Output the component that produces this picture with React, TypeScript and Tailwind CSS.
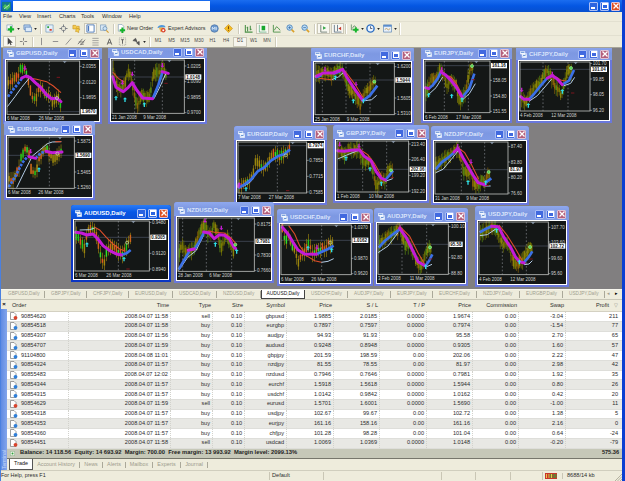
import React from "react";

type Pt = [number, number];

interface ChartData {
  name: string;
  // window rect inside the workspace, in px
  win: [number, number, number, number];
  // plot rect, in chart units (3 units = 1px)
  plot: [number, number, number, number];
  bright?: boolean;
  active?: boolean;
  price: Pt[];
  purple: Pt[][];
  blue: Pt[][];
  white: Pt[][];
  red: Pt[][];
  grid: number[];
  marker: number;
  last: [string, number];
  scale: [string, number][];
  dates: [string, number][];
  up?: Pt[];
  down?: Pt[];
  ring?: Pt;
  order?: Pt;
}

const charts: ChartData[] = [
  {
    name: "GBPUSD,Daily", win: [3, -3, 99, 79], plot: [21, 183, 218, 160], bright: true,
    price: [[25, 250], [35, 240], [50, 235], [62, 207], [75, 212], [85, 245], [95, 295], [105, 300], [115, 270], [125, 262], [135, 292], [147, 280], [155, 310], [165, 300], [175, 290], [183, 325]],
    purple: [[[65, 234], [78, 228], [90, 232], [105, 247], [122, 262], [140, 285], [155, 296], [170, 295], [183, 305]]],
    blue: [[[24, 290], [40, 268], [55, 250], [68, 232]]],
    white: [[[22, 320], [45, 290], [65, 262], [88, 234]]],
    red: [[[88, 234], [110, 238], [140, 245], [160, 258], [183, 278]]],
    grid: [148], marker: 194, last: ["1.9670", 335],
    scale: [["2.0355", 199], ["2.0120", 246], ["1.9895", 293]],
    dates: [["6 Mar 2008", 21], ["26 Mar 2008", 116]],
    down: [[75, 204]], ring: [171, 294], order: [175, 232],
  },
  {
    name: "USDCAD,Daily", win: [108, -4, 99, 80], plot: [336, 180, 217, 160],
    price: [[340, 205], [348, 250], [360, 268], [375, 250], [385, 215], [395, 240], [405, 295], [412, 315], [425, 285], [440, 295], [450, 285], [458, 230], [468, 210], [478, 215], [490, 200], [500, 235]],
    purple: [[[338, 230], [348, 262], [370, 275], [385, 262], [397, 248], [410, 270], [428, 294], [458, 296]], [[486, 215], [505, 220]]],
    blue: [[[458, 296], [475, 255], [488, 215]]],
    white: [[[462, 296], [480, 260], [497, 222]]],
    red: [[[338, 216], [355, 235], [372, 246]]],
    grid: [404, 487], marker: 508, last: ["1.0148", 231],
    scale: [["1.0205", 198], ["1.0090", 245], ["0.9895", 292], ["0.9700", 338]],
    dates: [["21 Jan 2008", 336], ["9 Mar 2008", 430]],
    up: [[348, 294], [375, 299], [433, 314]], down: [[367, 248], [397, 222], [487, 196]], order: [498, 250],
  },
  {
    name: "EURCHF,Daily", win: [311, -1, 103, 78], plot: [325, 188, 238, 155],
    price: [[330, 215], [345, 222], [360, 215], [375, 225], [390, 210], [405, 205], [415, 235], [425, 262], [440, 275], [455, 300], [460, 318], [470, 285], [480, 272], [490, 262], [500, 245], [508, 250]],
    purple: [[[328, 228], [350, 218], [380, 218], [408, 207], [420, 230], [445, 268], [468, 300]]],
    blue: [[[328, 232], [345, 224]], [[380, 220], [402, 212]], [[470, 300], [490, 285], [512, 256]]],
    white: [[[375, 238], [395, 230], [410, 217]], [[470, 302], [495, 298], [510, 285]]],
    red: [[[335, 234], [375, 238]], [[415, 212], [445, 252], [472, 296]]],
    grid: [347, 418, 490], marker: 513, last: ["1.5944", 239],
    scale: [["1.6200", 199], ["1.5605", 293], ["1.5310", 340]],
    dates: [["25 Jan 2008", 325], ["9 Mar 2008", 420]],
    up: [[386, 232], [440, 302], [470, 302]], down: [[355, 207], [448, 251]], ring: [503, 244],
  },
  {
    name: "EURJPY,Daily", win: [421, -3, 91, 78], plot: [27, 182, 195, 155],
    price: [[30, 270], [45, 238], [60, 238], [72, 205], [85, 230], [90, 258], [105, 240], [120, 255], [130, 305], [138, 290], [150, 270], [158, 218], [168, 200], [173, 225]],
    purple: [[[28, 262], [38, 265]], [[75, 215], [90, 225], [105, 240], [122, 262], [138, 290]]],
    blue: [[[38, 265], [50, 255], [65, 235], [75, 215]], [[140, 290], [160, 265], [175, 220]]],
    white: [[[35, 285], [60, 262], [80, 230]], [[140, 298], [160, 280], [178, 250]]],
    red: [[[80, 222], [105, 230], [120, 248], [138, 282]]],
    grid: [85, 157], marker: 181, last: ["161.16", 196],
    scale: [["158.05", 240], ["154.80", 287], ["151.55", 333]],
    dates: [["6 Feb 2008", 27], ["17 Mar 2008", 120]],
    up: [[38, 284], [107, 287], [138, 298]], down: [[77, 208]], ring: [168, 197], order: [172, 238],
  },
  {
    name: "CHFJPY,Daily", win: [516, -2, 96, 77], plot: [313, 184, 210, 147],
    price: [[318, 290], [330, 308], [345, 275], [360, 258], [375, 245], [390, 215], [400, 215], [415, 250], [430, 270], [436, 292], [445, 250], [455, 210], [468, 212]],
    purple: [[[315, 288], [325, 296], [340, 296]], [[395, 232], [410, 225], [425, 235], [440, 252]]],
    blue: [[[340, 296], [355, 280], [375, 255], [395, 232]], [[440, 252], [460, 240], [475, 208]]],
    white: [[[340, 302], [365, 285], [385, 262], [408, 235]], [[445, 255], [465, 248], [477, 230]]],
    red: [[[410, 222], [435, 238], [452, 242]]],
    grid: [382, 457], marker: 480, last: ["101.04", 206],
    scale: [["101.70", 188], ["99.85", 235], ["98.05", 282], ["96.20", 329]],
    dates: [["4 Feb 2008", 313], ["12 Mar 2008", 407]],
    up: [[338, 314], [440, 272]], down: [[318, 268], [410, 220]], ring: [466, 202], order: [471, 277],
  },
  {
    name: "EURUSD,Daily", win: [4, 73, 91, 79], plot: [22, 58, 199, 154], bright: true,
    price: [[25, 185], [40, 185], [52, 160], [62, 120], [75, 95], [85, 110], [92, 165], [105, 170], [112, 130], [125, 105], [140, 95], [150, 120], [160, 125], [172, 110], [182, 100]],
    purple: [[[85, 117], [105, 122]], [[136, 101], [155, 105], [184, 103]]],
    blue: [[[24, 208], [45, 175], [65, 135], [82, 115]], [[105, 122], [120, 106], [136, 101]]],
    white: [[[48, 210], [70, 165], [95, 115], [120, 95], [140, 78], [155, 73], [182, 72]]],
    red: [[[164, 72], [182, 72]]],
    grid: [146], marker: 178, last: ["1.5690", 113],
    scale: [["1.5875", 70], ["1.5465", 163], ["1.5260", 210]],
    dates: [["6 Mar 2008", 22], ["26 Mar 2008", 113]],
    up: [[115, 156]], down: [[90, 101]], ring: [170, 108],
  },
  {
    name: "EURGBP,Daily", win: [234, 78, 93, 79], plot: [111, 72, 206, 153], bright: true,
    price: [[115, 205], [125, 200], [140, 195], [155, 175], [162, 132], [172, 130], [182, 148], [195, 150], [205, 125], [215, 112], [225, 105], [235, 118], [245, 105], [258, 108], [265, 90]],
    purple: [[[112, 206], [114, 198]]],
    blue: [[[112, 210], [130, 200], [150, 185], [170, 160], [190, 148], [210, 128], [230, 115], [250, 108], [267, 95]]],
    white: [[[112, 206], [132, 203], [150, 190], [172, 158]]],
    red: [],
    grid: [229], marker: 275, last: ["0.7974", 83],
    scale: [["0.7850", 127], ["0.7715", 175], ["0.7585", 222]],
    dates: [["7 Mar 2008", 111], ["27 Mar 2008", 203]],
    up: [[135, 213]], ring: [254, 112], order: [260, 218],
  },
  {
    name: "GBPJPY,Daily", win: [333, 77, 96, 78], plot: [408, 69, 215, 153],
    price: [[412, 95], [430, 110], [445, 92], [460, 98], [473, 85], [482, 120], [492, 135], [505, 130], [515, 150], [522, 195], [530, 200], [540, 180], [552, 188], [560, 160], [570, 150], [575, 160]],
    purple: [[[410, 98], [430, 100], [450, 97], [475, 95], [490, 115], [510, 128], [525, 160], [540, 180], [553, 186]]],
    blue: [[[553, 186], [565, 172], [576, 158]]],
    white: [[[410, 123], [435, 112], [473, 97]], [[553, 190], [575, 182]]],
    red: [[[475, 93], [500, 110], [520, 136], [542, 175]]],
    grid: [485, 557], marker: 577, last: ["202.06", 154],
    scale: [["213.40", 78], ["206.40", 125], ["199.20", 172], ["192.20", 219]],
    dates: [["1 Feb 2008", 408], ["10 Mar 2008", 503]],
    up: [[435, 121], [507, 153], [541, 197]], down: [[416, 79], [474, 84]], ring: [570, 157], order: [574, 179],
  },
  {
    name: "NZDJPY,Daily", win: [431, 78, 98, 79], plot: [61, 73, 219, 156],
    price: [[62, 140], [75, 135], [90, 120], [105, 115], [120, 100], [130, 90], [140, 130], [150, 165], [165, 160], [178, 200], [190, 200], [200, 190], [210, 198], [220, 170], [228, 180]],
    purple: [[[118, 103], [130, 92], [145, 120], [162, 150], [175, 172], [190, 195], [212, 202]]],
    blue: [[[63, 155], [80, 135], [100, 120], [118, 105]], [[212, 195], [230, 182]]],
    white: [[[63, 165], [85, 155], [110, 125], [130, 100]], [[212, 205], [228, 205]]],
    red: [[[135, 94], [150, 105], [170, 140], [192, 185]]],
    grid: [140, 210], marker: 232, last: ["81.97", 156],
    scale: [["87.40", 87], ["83.80", 133], ["80.20", 180], ["76.60", 226]],
    dates: [["31 Jan 2008", 61], ["9 Mar 2008", 155]],
    up: [[160, 194], [213, 195]], down: [[169, 132], [129, 86]], ring: [222, 163], order: [218, 203],
  },
  {
    name: "AUDUSD,Daily", win: [71, 157, 100, 77], plot: [226, 311, 223, 150], bright: true, active: true,
    price: [[230, 350], [240, 370], [255, 390], [262, 345], [275, 332], [285, 340], [295, 370], [305, 425], [315, 435], [322, 390], [335, 385], [350, 395], [360, 405], [370, 408], [380, 385], [392, 366]],
    purple: [[[228, 345], [245, 347], [262, 353], [280, 350], [295, 365], [310, 385], [330, 400], [350, 410], [365, 413]]],
    blue: [[[262, 353], [276, 350]], [[365, 413], [380, 408], [393, 398]]],
    white: [[[240, 338], [270, 337], [285, 332]]],
    red: [[[285, 330], [300, 338], [320, 360], [340, 380], [360, 395], [378, 402]]],
    grid: [356], marker: 401, last: ["0.9305", 360],
    scale: [["0.9480", 315], ["0.9120", 408], ["0.8940", 455]],
    dates: [["6 Mar 2008", 226], ["26 Mar 2008", 320]],
    up: [[262, 382], [373, 425]], ring: [382, 376], order: [385, 455],
  },
  {
    name: "NZDUSD,Daily", win: [174, 154, 100, 81], plot: [531, 300, 229, 160],
    price: [[535, 400], [545, 380], [555, 408], [565, 398], [580, 392], [590, 360], [600, 335], [608, 322], [615, 325], [622, 350], [630, 345], [638, 325], [650, 345], [660, 390], [668, 370], [680, 355], [690, 385], [700, 405]],
    purple: [[[562, 397], [580, 393]], [[608, 342], [625, 345], [640, 362], [655, 350], [670, 352], [685, 362], [697, 385], [704, 392]]],
    blue: [[[533, 455], [550, 425], [565, 400]], [[580, 395], [595, 370], [608, 345]]],
    white: [[[533, 458], [560, 418], [585, 398], [608, 352]]],
    red: [[[620, 338], [640, 343], [670, 345], [690, 360], [707, 380]]],
    grid: [545, 616, 692], marker: 712, last: ["0.7981", 370],
    scale: [["0.8175", 318], ["0.7830", 411], ["0.7660", 458]],
    dates: [["28 Jan 2008", 531], ["6 Mar 2008", 625]],
    up: [[643, 379], [707, 400]], down: [[612, 308], [661, 330]], ring: [703, 380],
  },
  {
    name: "USDCHF,Daily", win: [277, 161, 96, 77], plot: [239, 323, 211, 149], bright: true,
    price: [[243, 335], [250, 365], [262, 358], [272, 385], [282, 400], [292, 440], [300, 415], [312, 395], [322, 370], [332, 405], [345, 400], [358, 395], [372, 392], [385, 375], [395, 380]],
    purple: [[[243, 330], [260, 350], [275, 375], [290, 398], [310, 410], [345, 411]]],
    blue: [[[345, 411], [365, 402], [380, 395], [397, 385]]],
    white: [[[360, 435], [380, 432], [397, 424]]],
    red: [[[262, 325], [280, 350], [295, 385], [315, 415], [340, 430], [360, 435]]],
    grid: [361], marker: 405, last: ["1.0162", 369],
    scale: [["1.0370", 329], ["0.9870", 423], ["0.9620", 469]],
    dates: [["6 Mar 2008", 239], ["26 Mar 2008", 330]],
    up: [[320, 392], [391, 398]], down: [[347, 390]], ring: [387, 376],
  },
  {
    name: "AUDJPY,Daily", win: [374, 160, 94, 78], plot: [530, 319, 211, 151],
    price: [[535, 375], [550, 365], [565, 350], [580, 345], [595, 328], [600, 350], [612, 380], [625, 380], [640, 420], [650, 440], [660, 442], [668, 425], [675, 405], [683, 388], [690, 400]],
    purple: [[[595, 332], [615, 360], [635, 400], [650, 432], [672, 445]]],
    blue: [[[532, 390], [550, 370], [575, 350], [595, 335]], [[672, 445], [683, 430], [693, 410]]],
    white: [[[530, 405], [560, 385], [590, 345]], [[672, 449], [692, 440]]],
    red: [[[597, 328], [625, 356], [650, 405], [670, 440]]],
    grid: [602, 676], marker: 695, last: ["95.58", 380],
    scale: [["100.10", 327], ["92.80", 420], ["88.80", 468]],
    dates: [["3 Feb 2008", 530], ["11 Mar 2008", 625]],
    up: [[673, 447]], down: [[596, 330]], ring: [686, 389], order: [688, 424],
  },
  {
    name: "USDJPY,Daily", win: [475, 158, 94, 81], plot: [190, 314, 208, 158],
    price: [[195, 345], [210, 335], [225, 330], [240, 332], [255, 368], [262, 382], [275, 378], [290, 420], [298, 445], [310, 435], [322, 425], [335, 400], [345, 392], [350, 400]],
    purple: [[[228, 327], [248, 328], [265, 360], [285, 390], [300, 420], [312, 433], [325, 437]]],
    blue: [[[192, 345], [210, 335], [228, 327]], [[325, 435], [340, 418], [350, 402]]],
    white: [[[192, 355], [215, 352], [240, 335]], [[325, 442], [340, 440], [350, 430]]],
    red: [[[250, 323], [275, 355], [300, 395], [320, 430]]],
    grid: [260, 332], marker: 352, last: ["102.72", 386],
    scale: [["107.70", 330], ["103.60", 374], ["99.60", 423], ["95.60", 469]],
    dates: [["4 Feb 2008", 190], ["12 Mar 2008", 284]],
    up: [[243, 339], [311, 434]], ring: [343, 389], order: [346, 425],
  },
];

const tabs: [string, string][] = [
  ["GBPUSD,Daily", "w-[43px]"],
  ["GBPJPY,Daily", "w-[42px]"],
  ["CHFJPY,Daily", "w-[42px]"],
  ["EURUSD,Daily", "w-[44px]"],
  ["USDCAD,Daily", "w-[44px]"],
  ["NZDUSD,Daily", "w-[44px]"],
  ["AUDUSD,Daily", "w-[44px]"],
  ["USDCHF,Daily", "w-[43px]"],
  ["AUDJPY,Daily", "w-[43px]"],
  ["EURJPY,Daily", "w-[42px]"],
  ["EURCHF,Daily", "w-[44px]"],
  ["NZDJPY,Daily", "w-[43px]"],
  ["EURGBP,Daily", "w-[43px]"],
  ["USDJPY,Daily", "w-[42px]"],
];

const columns = ["Order", "Time", "Type", "Size", "Symbol", "Price", "S / L", "T / P", "Price", "Commission", "Swap", "Profit"];

const orders = [
  ["90854620", "2008.04.07 11:58", "sell", "0.10", "gbpusd", "1.9885", "2.0185", "0.0000", "1.9674", "0.00", "-3.04", "211"],
  ["90854518", "2008.04.07 11:58", "buy", "0.10", "eurgbp", "0.7897", "0.7597", "0.0000", "0.7974", "0.00", "-1.54", "77"],
  ["90854307", "2008.04.07 11:56", "buy", "0.10", "audjpy", "94.93", "91.93", "0.00", "95.58", "0.00", "2.70", "65"],
  ["90854707", "2008.04.07 11:59", "buy", "0.10", "audusd", "0.9248", "0.8948", "0.0000", "0.9305", "0.00", "1.60", "57"],
  ["91104800", "2008.04.08 11:01", "buy", "0.10", "gbpjpy", "201.59", "198.59", "0.00", "202.06", "0.00", "2.22", "47"],
  ["90854324", "2008.04.07 11:57", "buy", "0.10", "nzdjpy", "81.55", "78.55", "0.00", "81.97", "0.00", "2.98", "42"],
  ["90855483", "2008.04.07 12:02", "buy", "0.10", "nzdusd", "0.7946", "0.7646", "0.0000", "0.7981", "0.00", "1.92", "35"],
  ["90854344", "2008.04.07 11:57", "buy", "0.10", "eurchf", "1.5918", "1.5618", "0.0000", "1.5944", "0.00", "0.80", "26"],
  ["90854315", "2008.04.07 11:57", "buy", "0.10", "usdchf", "1.0142", "0.9842", "0.0000", "1.0162", "0.00", "0.42", "20"],
  ["90854629", "2008.04.07 11:59", "sell", "0.10", "eurusd", "1.5701", "1.6001", "0.0000", "1.5690", "0.00", "-1.00", "11"],
  ["90854318", "2008.04.07 11:57", "buy", "0.10", "usdjpy", "102.67", "99.67", "0.00", "102.72", "0.00", "1.38", "5"],
  ["90854353", "2008.04.07 11:57", "buy", "0.10", "eurjpy", "161.16", "158.16", "0.00", "161.16", "0.00", "2.16", "0"],
  ["90854360", "2008.04.07 11:57", "buy", "0.10", "chfjpy", "101.28", "98.28", "0.00", "101.04", "0.00", "0.64", "-24"],
  ["90854451", "2008.04.07 11:58", "sell", "0.10", "usdcad", "1.0069", "1.0369", "0.0000", "1.0148", "0.00", "-0.20", "-79"],
];

const gridCols = "grid grid-cols-[62px_102px_42px_32px_42px_47px_46px_47px_46px_46px_47px_54px]";

const line = (pts: Pt[]) => pts.map((p) => p.join(",")).join(" ");

// price level along the polyline, used to hang the candles on
function levelAt(pts: Pt[], x: number) {
  for (let i = 1; i < pts.length; i++) {
    if (x <= pts[i][0]) {
      const [x0, y0] = pts[i - 1];
      const [x1, y1] = pts[i];
      return y0 + ((y1 - y0) * (x - x0)) / (x1 - x0);
    }
  }
  return pts[pts.length - 1][1];
}

function candles(c: ChartData) {
  const out = [];
  const end = c.price[c.price.length - 1][0];
  const hues = c.bright
    ? ["#22c418", "#a8860c", "#e0561c", "#30e02a", "#9a860c", "#d0641a"]
    : ["#7a7a02", "#666604", "#8a8208", "#747402", "#5a8a12", "#8a6208"];
  const step = c.bright ? 6 : 4.5;
  let i = 0;
  for (let x = c.price[0][0]; x <= end; x += step) {
    const noise = Math.sin(x * 12.9898) * 43758.5453;
    const r = noise - Math.floor(noise);
    const y = levelAt(c.price, x) + (r - 0.5) * 10;
    const wick = 14 + r * 14;
    const body = 5 + ((r * 7) % 1) * 10;
    const hue = hues[Math.floor(((r * 13) % 1) * hues.length)];
    out.push(
      <g key={i++}>
        <rect x={x - 1} y={y - wick} width="2.2" height={wick * 2} fill={c.bright ? "#9a8210" : hue} opacity="0.9" />
        <rect x={x - 2} y={y - body} width="4.4" height={body * 2} fill={hue} />
      </g>
    );
  }
  return out;
}

function Chart({ c }: { c: ChartData }) {
  const [px, py, pw, ph] = c.plot;
  const w = (c.win[2] - 6) * 3;
  const h = (c.win[3] - 18) * 3;
  const right = px + pw;
  return (
    <svg className="block h-full w-full bg-[#141716]" viewBox={`${px - 3} ${py - 3} ${w} ${h}`} preserveAspectRatio="none" fontFamily="Liberation Sans, sans-serif">
      {c.grid.map((x) => (
        <line key={x} x1={x} x2={x} y1={py} y2={py + ph} stroke="#858a90" strokeWidth="2" strokeDasharray="5 6" />
      ))}
      <line x1={px} x2={right} y1={c.last[1]} y2={c.last[1]} stroke="#454d59" strokeWidth="2.4" />
      {candles(c)}
      {c.white.map((l, i) => <polyline key={i} points={line(l)} fill="none" stroke="#b3cce6" strokeWidth="3" />)}
      {c.red.map((l, i) => <polyline key={i} points={line(l)} fill="none" stroke="#e04e2a" strokeWidth="3.2" />)}
      {c.blue.map((l, i) => (
        <polyline key={i} points={line(l)} fill="none" stroke="#3b70e6" strokeWidth="8" strokeLinejoin="round" strokeDasharray={c.name === "GBPUSD,Daily" || c.name === "EURUSD,Daily" ? "8 4" : undefined} />
      ))}
      {c.purple.map((l, i) => <polyline key={i} points={line(l)} fill="none" stroke="#c41bd6" strokeWidth="9" strokeLinecap="round" strokeLinejoin="round" />)}
      {c.up?.map(([x, y]) => <path key={x} d={`M${x} ${y - 7}l6 6h-4v8h-4v-8h-4z`} fill="#2fe0e8" />)}
      {c.down?.map(([x, y]) => <path key={x} d={`M${x} ${y + 7}l6 -6h-4v-8h-4v8h-4z`} fill="#c21ccf" />)}
      {c.order && <line x1={c.order[0] - 5} x2={c.order[0] + 5} y1={c.order[1]} y2={c.order[1]} stroke="#8f1620" strokeWidth="2.5" />}
      {c.ring && <circle cx={c.ring[0]} cy={c.ring[1]} r="4.5" fill={c.bright ? "none" : "#4fd24a"} stroke={c.bright ? "#c9e8b8" : "#a5f29b"} strokeWidth="2" />}
      <rect x={px} y={py} width={pw} height={ph} fill="none" stroke="#b5b8b5" strokeWidth="2.6" />
      <path d={`M${c.marker - 6} ${py}h12l-6 7z`} fill="#8593a3" />
      {c.scale.map(([t, y]) => (
        <g key={t}>
          <line x1={right} x2={right + 6} y1={y} y2={y} stroke="#b5b8b5" strokeWidth="2" />
          <text x={right + 8} y={y + 5} fontSize="13.5" fill="#d0d2d0">{t}</text>
        </g>
      ))}
      <rect x={right + 3} y={c.last[1] - 8} width={c.last[0].length * 8} height="16" fill="#fff" />
      <text x={right + 6} y={c.last[1] + 5} fontSize="13.5" fontWeight="bold" fill="#111">{c.last[0]}</text>
      {c.dates.map(([t, x]) => (
        <text key={t} x={x} y={py + ph + 18} fontSize="13.5" fill="#d0d2d0">{t}</text>
      ))}
    </svg>
  );
}

function WindowButtons({ active }: { active?: boolean }) {
  const blue = active ? "bg-[#2c64e0]" : "bg-[#4169df]";
  const close = active ? "bg-[#dd5024]" : "bg-[#b5607c]";
  return (
    <div className="flex gap-[2px]">
      <span className={`flex h-[9px] w-[9px] items-end rounded-[1px] border border-[#a9bdf5] p-[1px] ${blue}`}>
        <i className="h-[2px] w-[4px] bg-white" />
      </span>
      <span className={`flex h-[9px] w-[9px] items-center justify-center rounded-[1px] border border-[#a9bdf5] ${blue}`}>
        <i className="h-[6px] w-[6px] border border-t-2 border-white" />
      </span>
      <span className={`flex h-[9px] w-[9px] items-center justify-center rounded-[1px] border border-[#dfc1d4] ${close}`}>
        <svg viewBox="0 0 6 6" className="h-[6px] w-[6px]"><path d="M.5.5l5 5M5.5.5l-5 5" stroke="#fff" strokeWidth="1.3" /></svg>
      </span>
    </div>
  );
}

function ChartWindow({ c }: { c: ChartData }) {
  const [left, top, width, height] = c.win;
  return (
    <section
      className={`absolute flex flex-col rounded-t-[3px] px-[2px] pb-[2px] ${c.active ? "bg-[#0b35c4]" : "bg-[#6a78dc]"}`}
      style={{ left, top, width, height }}
    >
      <header
        className={`-mx-[2px] flex h-[14px] shrink-0 items-center rounded-t-[3px] pt-[2px] pr-[3px] pl-[4px] ${
          c.active ? "bg-gradient-to-b from-[#2b7cf5] via-[#0757e6] to-[#0a4fd8]" : "bg-gradient-to-b from-[#8fa8ee] via-[#7d98e2] to-[#809be6]"
        }`}
      >
        <svg viewBox="0 0 8 8" className="h-[7px] w-[7px] shrink-0">
          <path d="M.5.5h5v3h-5zM2.5 3h5v4.5h-5z" fill="#e9f2ff" stroke="#fff" strokeWidth=".6" />
          <path d="M1 1.5h4M3.5 6l1-1.5 1 1 1.2-1.5" fill="none" stroke="#3f78c8" strokeWidth=".9" />
        </svg>
        <b className={`ml-[2px] flex-1 whitespace-nowrap text-[6px] leading-none ${c.active ? "text-white" : "text-[#dbe5fb]"}`}>{c.name}</b>
        <WindowButtons active={c.active} />
      </header>
      <div className="min-h-0 flex-1 border border-white">
        <Chart c={c} />
      </div>
    </section>
  );
}

const glyphs: Record<string, React.ReactNode> = {
  add: <><path d="M1 1h6v6H1z" fill="#f7fbff" stroke="#7d98b5" strokeWidth=".7" /><path d="M5.5 2.500v7M2 6h7" stroke="#17b52c" strokeWidth="2.4" /></>,
  profiles: <><path d="M1 1h7v5H1z" fill="#b6d0ee" stroke="#5b83b8" strokeWidth=".8" /><path d="M2.5 3.5h7v5h-7z" fill="#dcebfa" stroke="#5b83b8" strokeWidth=".8" /></>,
  market: <><path d="M1 1h8v8H1z" fill="#e5f1fb" stroke="#6c93b8" strokeWidth=".7" /><path d="M2.5 3.5h2" stroke="#2ca03a" strokeWidth="2" /><path d="M5 6.5h2.5" stroke="#d4402a" strokeWidth="2" /></>,
  target: <><circle cx="5" cy="5" r="2.5" fill="none" stroke="#8a8f94" /><path d="M5 .5v3M5 6.5v3M.5 5h3M6.5 5h3" stroke="#73787d" strokeWidth="1" /></>,
  folder: <><path d="M1 1.5h3l1 1h3v3H1z" fill="#f5cc50" stroke="#c28c18" strokeWidth=".6" /><path d="M5 4l1.3 1.5L9 6 7.3 7.5 7.5 9.5 5.3 8.4 4 8.5l.4-2z" fill="#f6d048" stroke="#c28c18" strokeWidth=".6" /></>,
  panel: <><path d="M1 1h8v8H1z" fill="#fff" stroke="#4a78b5" strokeWidth="1" /><path d="M2 2h1.5v6H2z" fill="#4a78c0" /></>,
  tester: <><path d="M.5 1h6v6h-6z" fill="#d9e8f5" stroke="#6c93b8" strokeWidth=".7" /><circle cx="5.5" cy="5" r="2.2" fill="#cde4f7" stroke="#668bb0" strokeWidth=".8" /><path d="M7 7l2.5 2.5" stroke="#d09b30" strokeWidth="1.3" /></>,
  order: <><path d="M1.5.5h4l2 2V8h-6z" fill="#fff" stroke="#7d98b5" strokeWidth=".7" /><path d="M6 4v6M3 7h6" stroke="#14b32a" strokeWidth="2.2" /></>,
  expert: <><path d="M.5 4.5C1 0 9 0 9.5 3.5z" fill="#4d96dc" /><path d="M2 4h5v3.5L4 9z" fill="#e9b44a" /><circle cx="7" cy="7" r="2.5" fill="#d93b25" /><path d="M6 6h2v2H6z" fill="#fff" /></>,
  mql: <><circle cx="5" cy="5" r="4.2" fill="#6d9bd0" stroke="#41699c" strokeWidth=".7" /><path d="M2.5 6.5v-3l1.5 2 1.5-2v3M7 3.5v3" fill="none" stroke="#e6f0fa" strokeWidth=".9" /></>,
  warn: <><path d="M5 .5L9.5 5 5 9.5.5 5z" fill="#f6bf24" stroke="#c28410" strokeWidth=".6" /><path d="M5 2.5v3M5 6.5v1" stroke="#7d4b08" strokeWidth="1.2" /></>,
  bars: <path d="M1.5 1v8h8M4 3v5M3 4h1M7 2v5M7 6h1.3" fill="none" stroke="#4c9148" strokeWidth="1.2" />,
  candle: <><path d="M1.5 1v8h8" fill="none" stroke="#5a7" strokeWidth=".8" /><path d="M4 2h4v5H4z" fill="#18a62e" /></>,
  area: <path d="M1.5 1v8h8M2.5 7l2.5-4 2 1.5L9 7" fill="none" stroke="#4c9148" strokeWidth="1" />,
  zoomIn: <><circle cx="4" cy="4" r="3" fill="#bcdcf5" stroke="#4c84bb" /><path d="M2.5 4h3M4 2.5v3" stroke="#2f68a5" strokeWidth=".8" /><path d="M6.3 6.3L9 9" stroke="#dba029" strokeWidth="1.8" /></>,
  zoomOut: <><circle cx="4" cy="4" r="3" fill="#bcdcf5" stroke="#4c84bb" /><path d="M2.5 4h3" stroke="#2f68a5" strokeWidth=".8" /><path d="M6.3 6.3L9 9" stroke="#dba029" strokeWidth="1.8" /></>,
  scroll: <><path d="M2 1v8h7" fill="none" stroke="#6d7d72" strokeWidth="1" /><path d="M4.5 2.5v4L8 4.5z" fill="#36a648" /></>,
  shift: <><path d="M1.5 1v8h8M5 1v7" fill="none" stroke="#64788a" strokeWidth="1" /><path d="M9 3v4L6 5z" fill="#c8362a" /></>,
  indicator: <><path d="M1.5.5v6h6M2.500 5l2-3 2 1" fill="none" stroke="#5d8a62" strokeWidth=".9" /><path d="M6.500 3.500v6M3.500 6.500h6" stroke="#17b52c" strokeWidth="2.2" /></>,
  clock: <><circle cx="5" cy="5" r="4" fill="#eaf4ff" stroke="#2f6fc2" strokeWidth="1.6" /><path d="M5 2.5V5h2" fill="none" stroke="#334" strokeWidth=".8" /></>,
  template: <><path d="M.5 1h9v8h-9z" fill="#e7f0fa" stroke="#6289b5" strokeWidth=".8" /><path d="M.5 2h9" stroke="#5a8ccc" strokeWidth="2" /><path d="M2 6l2-1 2 1.5L8 5" fill="none" stroke="#c08a30" strokeWidth=".8" /></>,
  cursor: <path d="M3 .5v8l2-1.8 1.2 2.6 1.2-.6L6.2 6.3h2.5z" fill="#444" />,
  cross: <path d="M5 1v3M5 6v3M1 5h3M6 5h3" stroke="#777" strokeWidth="1" />,
  vline: <path d="M5 1v8" stroke="#888" strokeWidth="1" />,
  hline: <path d="M2 5h6" stroke="#888" strokeWidth="1" />,
  trend: <path d="M2 8.5L8 1.5" stroke="#888" strokeWidth="1" />,
  channel: <path d="M1 8l5-6M4 9l5-6M2 5.5h6M3.5 8h4" stroke="#666" strokeWidth=".9" />,
  fibo: <path d="M1.5 1.5h7M1.5 4h7M1.5 6.5h7M1.5 9h7" stroke="#888" strokeWidth=".8" />,
  text: <path d="M2.5 8.500L5 2l2.500 6.500M3.300 6.500h3.400" fill="none" stroke="#555" strokeWidth="1" />,
  label: <><path d="M1.5 1h7v8h-7z" fill="none" stroke="#888" strokeWidth=".8" strokeDasharray="1 1" /><path d="M3.5 3h3M5 3v4.5" stroke="#555" /></>,
  arrows: <path d="M1 4l3-2.5L5.5 5zM5 6.5l3-1.5v4zM3 3l4 4" fill="#555" stroke="#555" strokeWidth=".8" />,
};

function Tool({ name, w, pressed, arrow }: { name: string; w: string; pressed?: boolean; arrow?: boolean }) {
  return (
    <span className={`flex h-full items-center justify-center ${w}`}>
      <span className={`flex h-[11px] items-center justify-center px-[1px] ${pressed ? "border border-[#cbc8b8] bg-[#f8f7f1]" : ""}`}>
        <svg viewBox="0 0 10 10" className="h-[9px] w-[9px] shrink-0">{glyphs[name]}</svg>
      </span>
      {arrow && <svg viewBox="0 0 4 3" className="ml-[1px] h-[2px] w-[3px] shrink-0"><path d="M0 0h4L2 3z" fill="#222" /></svg>}
    </span>
  );
}

const Sep = ({ w = "w-[5px]" }: { w?: string }) => (
  <span className={`flex justify-center ${w}`}><i className="h-[10px] w-[2px] border-l border-[#cfccbc] bg-white" /></span>
);

const frames: [string, string][] = [
  ["M1", "w-[14px]"], ["M5", "w-[13px]"], ["M15", "w-[14px]"], ["M30", "w-[14px]"], ["H1", "w-[13px]"],
  ["H4", "w-[14px]"], ["D1", "w-[14px]"], ["W1", "w-[13px]"], ["MN", "w-[14px]"],
];

export default function App() {
  return (
    <div className="flex h-[481px] w-[625px] flex-col overflow-hidden border-r-[3px] border-l border-r-[#0b3fd2] border-l-[#4a80e0] bg-[#eeecdc] font-['Liberation_Sans',sans-serif] text-[5.6px] leading-none text-[#2c2c2c]">
      {/* Title bar */}
      <div className="-mr-[3px] flex h-[12px] shrink-0 items-center bg-gradient-to-b from-[#1a6df0] via-[#0456e2] to-[#0750cf] pr-[5px]">
        <svg viewBox="0 0 9 9" className="ml-[1px] h-[9px] w-[9px]">
          <path d="M0 0h9v9H0z" fill="#167a86" />
          <path d="M1 5l2-3 2 2 3-3v4L5 8z" fill="#4cc05c" />
          <path d="M2 7l5-4" stroke="#cfe8d4" strokeWidth=".8" />
        </svg>
        <div className="ml-[2px] h-[10px] w-[197px] bg-white" />
        <div className="flex-1" />
        <WindowButtons active />
      </div>

      {/* Menu */}
      <nav className="flex h-[10px] shrink-0 items-center border-b border-[#e2e0d0]">
        <span className="ml-[2px] w-[16px]">File</span>
        <span className="w-[18px]">View</span>
        <span className="w-[22px]">Insert</span>
        <span className="w-[22px]">Charts</span>
        <span className="w-[21px]">Tools</span>
        <span className="w-[27px]">Window</span>
        <span>Help</span>
      </nav>

      <div className="flex h-[14px] shrink-0 items-center border-b border-[#e2e0d0]">
        <Tool name="add" w="ml-[3px] w-[17px]" arrow />
        <Tool name="profiles" w="w-[17px]" arrow />
        <Sep />
        <Tool name="market" w="w-[13px]" />
        <Tool name="target" w="w-[14px]" />
        <Tool name="folder" w="w-[13px]" />
        <Tool name="panel" w="w-[14px]" pressed />
        <Tool name="tester" w="w-[14px]" />
        <Sep w="w-[5px]" />
        <Tool name="order" w="w-[11px]" />
        <span className="w-[28px] text-[5.4px] whitespace-nowrap">New Order</span>
        <Tool name="expert" w="w-[12px]" />
        <span className="w-[40px] pl-[1px] text-[5.4px] whitespace-nowrap">Expert Advisors</span>
        <Tool name="mql" w="w-[14px]" />
        <Tool name="warn" w="w-[14px]" />
        <Sep w="w-[7px]" />
        <Tool name="bars" w="w-[13px]" />
        <Tool name="candle" w="w-[14px]" pressed />
        <Tool name="area" w="w-[14px]" />
        <Tool name="zoomIn" w="w-[15px]" />
        <Tool name="zoomOut" w="w-[14px]" />
        <Sep w="w-[5px]" />
        <Tool name="scroll" w="w-[13px]" pressed />
        <Tool name="shift" w="w-[14px]" pressed />
        <Sep w="w-[4px]" />
        <Tool name="indicator" w="w-[16px]" arrow />
        <Tool name="clock" w="w-[17px]" arrow />
        <Tool name="template" w="w-[17px]" arrow />
        <i className="ml-[1px] h-[12px] w-[2px] border-l border-[#cfccbb] bg-white" />
      </div>

      <div className="flex h-[12px] shrink-0 items-center border-b border-[#a5a498]">
        <Tool name="cursor" w="ml-[2px] w-[13px]" pressed />
        <Tool name="cross" w="w-[15px]" />
        <Sep w="w-[3px]" />
        <Tool name="vline" w="w-[14px]" />
        <Tool name="hline" w="w-[14px]" />
        <Tool name="trend" w="w-[13px]" />
        <Tool name="channel" w="w-[13px]" />
        <Tool name="fibo" w="w-[14px]" />
        <Tool name="text" w="w-[14px]" />
        <Tool name="label" w="w-[13px]" />
        <Tool name="arrows" w="w-[19px]" arrow />
        <Sep w="w-[3px]" />
        {frames.map(([f, w]) => (
          <span key={f} className={`flex h-[10px] items-center justify-center text-[4.8px] text-[#4a4a48] ${w} ${f === "D1" ? "border border-[#cbc8b8] bg-[#f6f5ee]" : ""}`}>
            {f}
          </span>
        ))}
        <i className="ml-[1px] h-[10px] w-[2px] border-l border-[#cfccbb] bg-white" />
      </div>

      {/* Workspace with the chart windows */}
      <main className="relative h-[241px] shrink-0 overflow-hidden bg-[#817f80]">
        <div className="absolute inset-y-0 -left-px w-full">
          {charts.map((c) => <ChartWindow key={c.name} c={c} />)}
        </div>
      </main>

      <div className="flex h-[10px] shrink-0 items-center border-t border-[#f8f7ef] pl-[1px] text-[4.7px] text-[#a19f90]">
        {tabs.map(([t, w]) =>
          t === "AUDUSD,Daily" ? (
            <span key={t} className={`flex h-full items-center justify-center border border-t-0 border-[#444] bg-white text-[4.9px] text-[#111] ${w}`}>{t}</span>
          ) : (
            <span key={t} className={`flex h-[7px] items-center border-r border-[#aaa899] pl-[6px] whitespace-nowrap ${w}`}>{t}</span>
          )
        )}
        <span className="ml-[2px]">◂</span>
        <span className="ml-[5px] text-black">▸</span>
      </div>

      {/* Terminal */}
      <div className="flex h-[171px] shrink-0 border-t border-[#c9c7b7]">
        <aside className="flex w-[6px] shrink-0 flex-col">
          <b className="h-[9px] text-center text-[6px] leading-[8px] text-black">×</b>
          <div className="flex flex-1 items-end justify-center bg-gradient-to-r from-[#5f8ae2] to-[#83a5ec] pb-px">
            <span className="rotate-180 text-[5px] text-[#c6d8fa] [writing-mode:vertical-rl]">Terminal</span>
          </div>
        </aside>

        <div className="min-w-0 flex-1">
          <div className={`${gridCols} h-[12px] items-center border-b border-[#d4d1c2]`}>
            {columns.map((c, i) => (
              <span key={i} className={i === 0 ? "pl-[5px]" : "pr-[2px] text-right whitespace-nowrap"}>
                {c}
                {i === 11 && <span className="ml-[5px] text-[5px] text-[#8c8a7c]">▽</span>}
              </span>
            ))}
          </div>

          {orders.map((row, r) => (
            <div key={row[0]} className={`${gridCols} h-[9.75px] items-stretch border-b border-[#dededa] ${r % 2 ? "bg-[#e8e8e4]" : "bg-white"}`}>
              {row.map((v, i) => (
                <span
                  key={i}
                  className={`flex items-center ${i === 0 ? "gap-[3px] pl-[3px]" : "justify-end pr-[2px]"} ${i < 11 ? "border-r border-dotted border-[#d2d2cc]" : ""}`}
                >
                  {i === 0 && (
                    <svg viewBox="0 0 8 8" className="h-[8px] w-[8px] shrink-0">
                      <path d="M.5.5h3.500l2 2v5H.5z" fill="#fff" stroke="#777" strokeWidth=".7" />
                      <circle cx="5.5" cy="5.8" r="1.9" fill={row[2] === "sell" ? "#d9442c" : "#2f7fd8"} />
                    </svg>
                  )}
                  {v}
                </span>
              ))}
            </div>
          ))}

          <div className="flex h-[10.5px] items-center border-b border-[#77776c] bg-[#c6c8b8] pr-[3px] pl-[3px] font-bold text-[#1d1d1d]">
            <svg viewBox="0 0 6 6" className="mr-[5px] h-[5px] w-[5px]">
              <path d="M.3.3h5.4v5.4H.3z" fill="#eef5ea" stroke="#6f9a68" strokeWidth=".6" />
              <circle cx="3" cy="3" r="1.2" fill="#2fa03a" />
            </svg>
            <span className="flex-1 text-[5.8px] whitespace-pre">Balance: 14 118.56  Equity: 14 693.92  Margin: 700.00  Free margin: 13 993.92  Margin level: 2099.13%</span>
            <span>575.36</span>
          </div>

          <div className="flex h-[11px] items-center text-[5.4px] text-[#9d9b8c]">
            <span className="ml-[2px] flex h-full w-[24px] items-center justify-center border border-t-0 border-[#555] bg-white text-[#111]">Trade</span>
            <span className="flex h-[6px] w-[47px] items-center justify-center border-r border-[#aaa899] whitespace-nowrap">Account History</span>
            <span className="flex h-[6px] w-[23px] items-center justify-center border-r border-[#aaa899]">News</span>
            <span className="flex h-[6px] w-[23px] items-center justify-center border-r border-[#aaa899]">Alerts</span>
            <span className="flex h-[6px] w-[27px] items-center justify-center border-r border-[#aaa899]">Mailbox</span>
            <span className="flex h-[6px] w-[28px] items-center justify-center border-r border-[#aaa899]">Experts</span>
            <span className="flex h-[6px] w-[27px] items-center justify-center border-r border-[#aaa899]">Journal</span>
          </div>
        </div>
      </div>

      {/* Status bar */}
      <footer className="flex flex-1 items-center border-t border-[#d0cebe] whitespace-nowrap">
        <span className="w-[268px] text-[5.4px]">For Help, press F1</span>
        <span className="flex h-[8px] w-[54px] items-center border-l border-[#c9c6b5] pl-[2px]">Default</span>
        <span className="h-[8px] w-[118px] border-l border-[#c9c6b5]" />
        <span className="h-[8px] w-[34px] border-l border-[#c9c6b5]" />
        <span className="h-[8px] w-[35px] border-l border-[#c9c6b5]" />
        <span className="h-[8px] w-[32px] border-l border-[#c9c6b5]" />
        <span className="flex h-[8px] w-[20px] items-center border-l border-[#c9c6b5] pl-[2px]">
          <svg viewBox="0 0 12 6" className="h-[6px] w-[12px]">
            <path d="M0 0h12v6H0z" fill="#c9362c" />
            <path d="M1.5 1v4M4 1v4M6.5 1v4" stroke="#e8c84a" strokeWidth="1" />
            <path d="M5.2 1v4M7.8 1v4M9.5 1v4M11 1v4" stroke="#3f9b3a" strokeWidth=".9" />
          </svg>
        </span>
        <span className="flex-1 border-l border-[#c9c6b5] pl-[4px]">8688/14 kb</span>
        <svg viewBox="0 0 7 7" className="h-[7px] w-[7px] self-end"><path d="M7 0L0 7M7 2.5L2.5 7M7 5L5 7" stroke="#b5b2a0" strokeWidth="1" /></svg>
      </footer>
    </div>
  );
}
